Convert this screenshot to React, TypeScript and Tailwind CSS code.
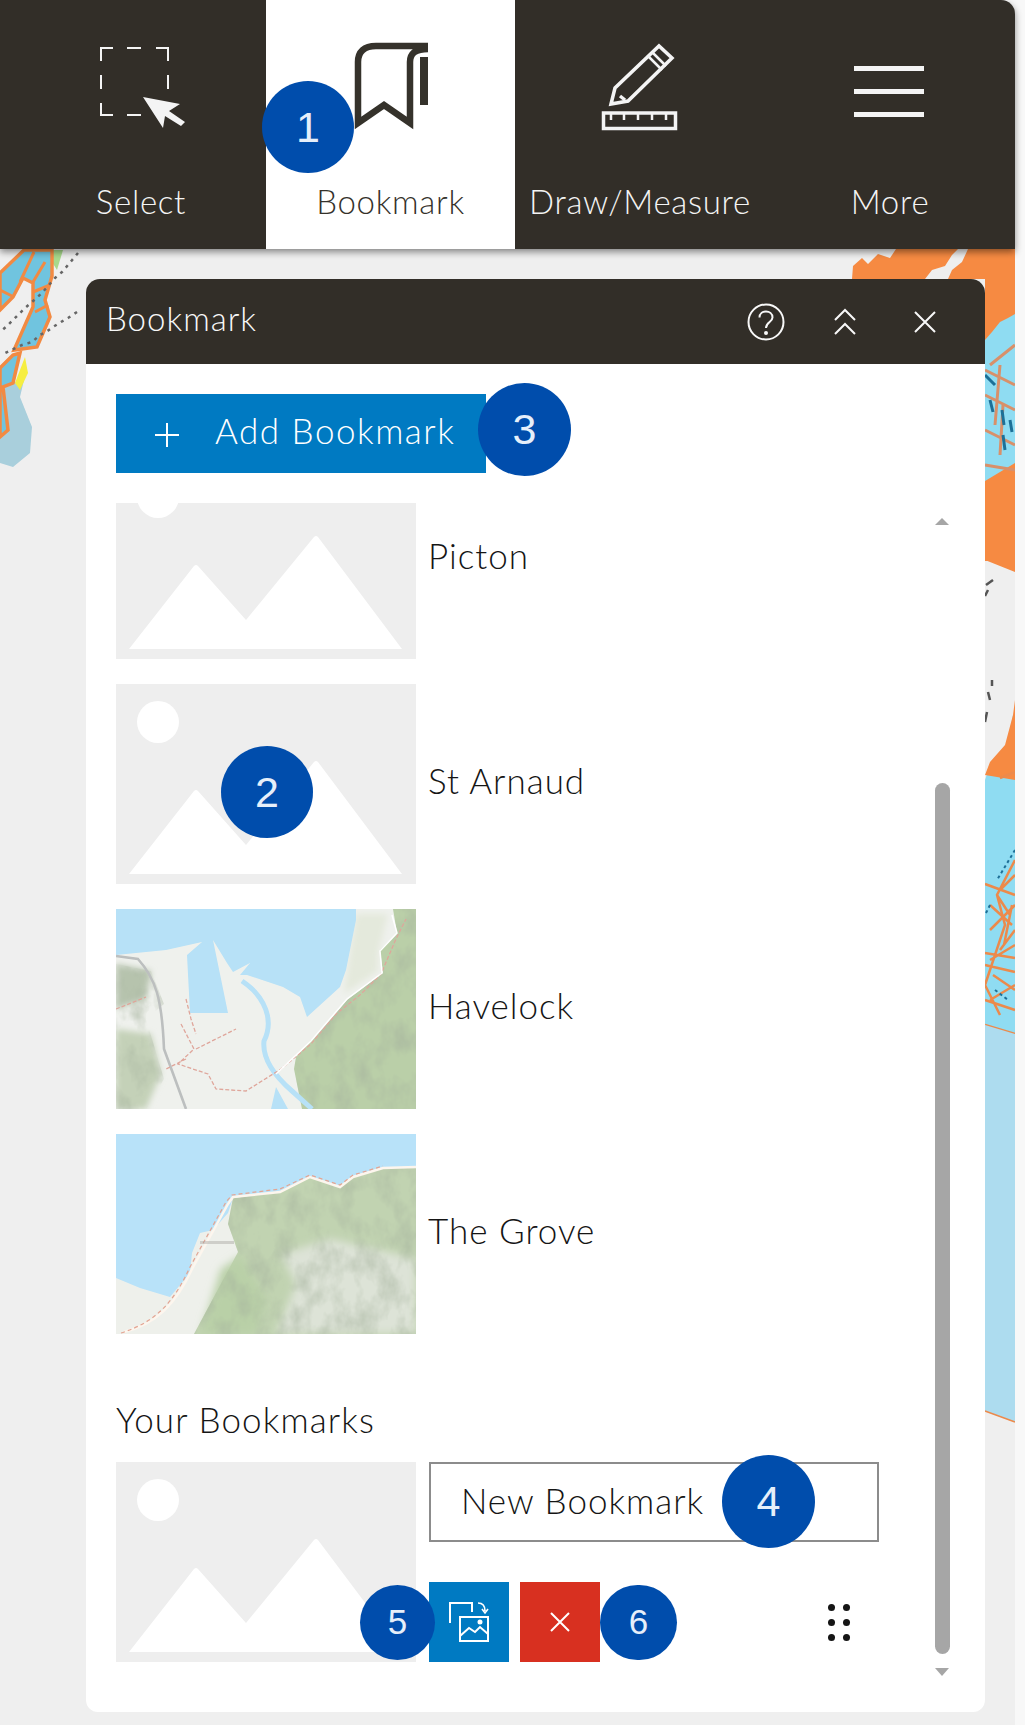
const panelFont = { fontFamily: 'Lato, "Open Sans", sans-serif' };

function Badge({ n, className }: { n: number; className: string }) {
  return (
    <div
      className={`absolute z-20 flex items-center justify-center rounded-full bg-[#004dac] text-[#e6effa] ${className}`}
      style={{ fontFamily: '"Liberation Sans", Arial, sans-serif' }}
    >
      {n}
    </div>
  );
}

function SelectIcon() {
  return (
    <svg viewBox="16 0 250 175" width={250} height={175}>
      <g fill="none" stroke="#f4f4f4" strokeWidth={2}>
        <path d="M101 61V48H113M127 48H141M156 48H168V61M101 75V89M168 75V89M101 103V115H113M127 115H141" />
      </g>
      <path d="M143 97L180 104L169 111L185 122L181 126L165 116L163 128Z" fill="#f4f4f4" />
    </svg>
  );
}

function BookmarkIcon() {
  return (
    <svg viewBox="265 0 250 175" width={250} height={175}>
      <path
        d="M427 46H375C363 46 357 52 357 62V123L383 105L409 123V62C409 53 415 49 427 49"
        fill="none"
        stroke="#35322b"
        strokeWidth={6.5}
      />
      <rect x={419} y={57} width={8} height={48} fill="#35322b" />
    </svg>
  );
}

function DrawIcon() {
  return (
    <svg viewBox="515 0 250 175" width={250} height={175}>
      <g fill="none" stroke="#f4f4f4" strokeWidth={3.5}>
        <path d="M611 104L615 88L659 46L672 58L628 101Z" />
        <path d="M648 56L662 70M652 52L666 66" strokeWidth={2.5} />
        <path d="M620 96L625 100" />
        <rect x={603.5} y={113} width={72} height={15.5} />
        <path d="M611 113V120M624 113V120M638 113V120M652 113V120M666 113V120" strokeWidth={2.5} />
      </g>
    </svg>
  );
}

function MoreIcon() {
  return (
    <svg viewBox="765 0 250 175" width={250} height={175}>
      <path d="M854 68.5H924M854 91.5H924M854 114.5H924" stroke="#f4f4f4" strokeWidth={5} />
    </svg>
  );
}

function Tab({ label, active, children }: { label: string; active?: boolean; children: React.ReactNode }) {
  return (
    <div className={`flex h-[249px] flex-col ${active ? 'w-[249px] bg-white text-[#35322b]' : 'w-[250px] text-[#f4f4f4]'}`}>
      {children}
      <div className="-mt-[2px] flex h-[58px] items-center justify-center text-[33px] font-light tracking-[0.7px] whitespace-nowrap">{label}</div>
    </div>
  );
}

function PlaceholderThumb() {
  return (
    <svg viewBox="0 0 300 200" width={300} height={200} className="block shrink-0">
      <rect width={300} height={200} fill="#eeeeee" />
      <circle cx={42} cy={38} r={21} fill="#ffffff" />
      <path d="M13 190L78 107Q80 105 82 107L130 161L198 78Q200 76 202 78L286 190Z" fill="#ffffff" />
    </svg>
  );
}

// soft relief over the hills of a map thumbnail
function Relief({ id, clip, seed }: { id: string; clip: string; seed: number }) {
  return (
    <>
      <defs>
        <filter id={id} x="0" y="0" width="100%" height="100%">
          <feTurbulence type="fractalNoise" baseFrequency="0.05 0.035" numOctaves={4} seed={seed} />
          <feColorMatrix values="0 0 0 0 0.38  0 0 0 0 0.45  0 0 0 0 0.34  1.2 0 0 0 -0.46" />
        </filter>
        <clipPath id={`${id}-clip`}>
          <path d={clip} />
        </clipPath>
      </defs>
      <g clipPath={`url(#${id}-clip)`}>
        <rect width={300} height={200} filter={`url(#${id})`} />
      </g>
    </>
  );
}

function HavelockThumb() {
  const hills = 'M277 0H300V200H186L178 160L180 148L211 114L231 91L267 64L264 41L281 24ZM0 55L35 62L48 95L30 110L48 170L30 200H0Z';
  return (
    <svg viewBox="0 0 300 200" width={300} height={200} className="block shrink-0">
      <defs>
        <filter id="havelock-blur">
          <feGaussianBlur stdDeviation={0.7} />
        </filter>
        <filter id="havelock-soft">
          <feGaussianBlur stdDeviation={3} />
        </filter>
      </defs>
      <rect width={300} height={200} fill="#eff1ed" />
      <g filter="url(#havelock-soft)">
        <path d="M0 55L35 62L30 90L0 100Z" fill="#b6c3ad" />
        <path d="M0 120L35 125L45 165L30 200H0Z" fill="#c4d1b8" />
        <path d="M240 5L272 5L262 45L262 62L228 85Z" fill="#e4e9dc" />
      </g>
      <g filter="url(#havelock-blur)">
        <path d="M277 0H300V200H186L178 160L180 148L211 114L231 91L267 64L264 41L281 24Z" fill="#bacfa8" />
      </g>
      <Relief id="havelock-relief" clip={hills} seed={4} />
      <g filter="url(#havelock-blur)">
        <path d="M0 0H240V11L230 61L224 78L191 108L184 88L167 78L131 66L124 66L134 54L117 63L111 54L97 31L112 104L74 104L71 46L86 33L50 41L0 46Z" fill="#b7e1f7" />
        <path d="M126 72C150 88 158 112 148 132C146 150 160 168 176 182L196 200" fill="none" stroke="#b7e1f7" strokeWidth={5} />
        <path d="M160 178L172 200H155Z" fill="#b7e1f7" />
        <path d="M0 47L22 50C40 70 46 90 48 140L70 200" fill="none" stroke="#bcbfbf" strokeWidth={2.6} />
        <path d="M0 100L30 88M70 90L75 110L80 125M65 115L78 140L62 155L92 165L100 180L130 182L165 160L195 135L220 105L245 85L265 65L280 30L290 10M70 150L50 160M80 140L120 120" fill="none" stroke="#dfa69b" strokeWidth={1.3} strokeDasharray="4 2" />
        <path d="M160 165L195 132L231 90L266 64L264 42L281 24L276 6" fill="none" stroke="#ffffff" strokeWidth={1.5} />
      </g>
    </svg>
  );
}

function GroveThumb() {
  const hills = 'M117 64L164 58L194 43L224 53L237 43L267 34L300 33V200H78L122 118L112 90Z';
  return (
    <svg viewBox="0 0 300 200" width={300} height={200} className="block shrink-0">
      <defs>
        <filter id="grove-blur">
          <feGaussianBlur stdDeviation={0.7} />
        </filter>
        <filter id="grove-soft">
          <feGaussianBlur stdDeviation={4} />
        </filter>
      </defs>
      <rect width={300} height={200} fill="#eef0eb" />
      <path d={hills} fill="#c1d3b1" />
      <g filter="url(#grove-soft)">
        <path d="M165 120L215 105L300 125V200H160L180 150Z" fill="#dde3d7" />
        <path d="M85 200L105 135L125 122L150 165L140 200Z" fill="#b9d0a7" />
      </g>
      <Relief id="grove-relief" clip={hills} seed={9} />
      <g filter="url(#grove-blur)">
        <path d="M0 0H300V33L267 34L237 43L224 53L194 43L164 58L117 64L112 79L97 96L84 99L76 119L74 139L54 163L24 154L0 144Z" fill="#b8e2f9" />
        <path d="M8 198C40 190 60 170 76 135L112 70L117 63L164 58L194 43L224 53L237 43L267 34L300 33" fill="none" stroke="#fdf6ee" strokeWidth={2.5} />
        <path d="M5 199C40 188 58 168 74 133L110 68L116 61L164 55L194 41L224 51L237 41L267 32" fill="none" stroke="#e3a593" strokeWidth={1.2} strokeDasharray="4 3" />
      </g>
      <rect x={84} y={107} width={34} height={3} fill="#9e9a96" opacity={0.4} />
    </svg>
  );
}

function BookmarkRow({ title, thumb }: { title: string; thumb: React.ReactNode }) {
  return (
    <div className="flex h-[200px] gap-[12px]">
      {thumb}
      <div className="flex h-[192px] items-center text-[35px] font-light tracking-[1px] whitespace-nowrap text-[#151515]">{title}</div>
    </div>
  );
}

function MapBackdrop() {
  return (
    <svg className="absolute top-[249px] left-0" viewBox="0 249 1015 1476" width={1015} height={1476}>
      <defs>
        <filter id="map-soft">
          <feGaussianBlur stdDeviation={0.6} />
        </filter>
      </defs>
      <rect x={0} y={249} width={1015} height={1476} fill="#efefef" />
      <g filter="url(#map-soft)">
        {/* left side */}
        <path d="M0 463L13 467L30 453L32 427L20 397L24 380L0 385Z" fill="#a9cfdc" />
        <path d="M52 250L63 250L57 270L52 262Z" fill="#a8d98c" />
        <path d="M0 273L24 250L52 250L52 276L45 300L50 317L37 347L14 350L33 307L33 283L23 278L13 297L0 310Z" fill="#6fc4df" stroke="#f28a43" strokeWidth={3.5} />
        <path d="M0 368L13 355L20 353L13 383L3 387L8 430L0 437Z" fill="#6fc4df" stroke="#f28a43" strokeWidth={3.5} />
        <path d="M34 252L20 282M45 262L33 282M50 285L33 292M48 305L35 312M0 290L12 296" stroke="#f28a43" strokeWidth={3} fill="none" />
        <path d="M25 357L28 373L20 390L15 383Z" fill="#f6ee3f" />
        <path d="M78 253L68 265L62 272L55 278L42 293L32 302L25 308L19 314L13 320L7 326L0 332M77 312L68 318L61 322L53 327L46 332L40 335L32 342L22 345L5 353" fill="none" stroke="#666666" strokeWidth={2.5} strokeDasharray="3 5" />
        {/* top and right strip */}
        <path d="M852 279L853 266L862 258L868 264L878 254L890 258L896 249H1015V279Z" fill="#f68a43" />
        <path d="M925 279L932 270L945 266L952 255L958 249H968L962 262L952 270L948 279Z" fill="#eeeeee" />
        <rect x={985} y={279} width={30} height={282} fill="#f68a43" />
        <path d="M985 340L992 332L1000 322L1008 318L1015 314V463L985 481Z" fill="#8fdcf2" />
        <path d="M985 370L1015 385M990 365L1015 345M985 395L1015 410M985 430L1015 445M1000 365L995 425M985 465L1015 470M1003 405L1000 455" stroke="#d8906a" strokeWidth={3} fill="none" />
        <path d="M990 400L993 412M1002 410L1004 425M1010 420L1012 432M985 375L995 385M1003 435L1005 450" stroke="#1f6f97" strokeWidth={3} fill="none" />
        <path d="M985 560L1015 572V561H985Z" fill="#f68a43" />
        <path d="M986 585L993 580M985 596L988 590M992 680L992 686M988 692L990 700M987 712L985 722" stroke="#555555" strokeWidth={2.5} />
        <path d="M985 780L990 765L1007 744L1013 715H1015V1034L985 1025Z" fill="#8fdcf2" />
        <path d="M1013 715L1015 700V780L985 775L990 762L1005 745Z" fill="#f68a43" />
        <path d="M985 884L1015 895M985 953L1015 958M985 965L1015 972M985 1025L1015 1034M1015 860L997 895L1005 925L985 985L1000 1015M1015 905L990 930M1015 930L1000 950M1015 985L990 1000M1000 778L1015 772M1015 875L1000 890M1012 905L1004 945M1015 945L990 960M993 975L1015 990M985 1000L1015 1010M990 905L1012 925M997 895L1010 915" stroke="#ec8a4c" strokeWidth={2.5} fill="none" />
        <path d="M1015 850L997 880M990 905L985 915M995 990L1008 1000" stroke="#1f6f97" strokeWidth={2} strokeDasharray="3 3" fill="none" />
        <path d="M985 1025L1015 1034V1422L985 1411Z" fill="#addcef" />
        <path d="M985 1411L1015 1422" stroke="#ec8a4c" strokeWidth={1.5} />
      </g>
    </svg>
  );
}

export default function App() {
  return (
    <div className="relative h-[1725px] w-[1025px] overflow-hidden bg-[#f8f8f8]" style={panelFont}>
      <MapBackdrop />

      {/* top toolbar */}
      <div className="relative z-10 flex h-[249px] w-[1015px] rounded-tr-[14px] bg-[#322e28] pl-[16px] shadow-[0_3px_7px_rgba(0,0,0,0.45)]">
        <Tab label="Select">
          <SelectIcon />
        </Tab>
        <Tab label="Bookmark" active>
          <BookmarkIcon />
        </Tab>
        <Tab label="Draw/Measure">
          <DrawIcon />
        </Tab>
        <Tab label="More">
          <MoreIcon />
        </Tab>
      </div>

      {/* bookmark panel */}
      <div className="relative mt-[30px] ml-[86px] flex h-[1433px] w-[899px] flex-col overflow-hidden rounded-t-[14px] rounded-b-[12px] bg-white">
        <div className="flex h-[85px] shrink-0 items-center justify-between bg-[#322e28] pr-[49px] pl-[20px] text-[#f8f8f8]">
          <span className="-mt-[6px] text-[33px] font-light tracking-[1px]">Bookmark</span>
          <div className="flex items-center">
            <svg viewBox="0 0 40 40" width={40} height={40}>
              <circle cx={20} cy={20} r={17.5} fill="none" stroke="#f8f8f8" strokeWidth={2} />
              <path d="M13.5 15.5C13.5 7.5 26.5 7.5 26.5 15.5C26.5 20 20 20 20 26" fill="none" stroke="#f8f8f8" strokeWidth={2} />
              <circle cx={20} cy={31} r={2} fill="#f8f8f8" />
            </svg>
            <svg viewBox="0 0 22 30" width={22} height={30} className="ml-[48px]">
              <path d="M1 13L11 3L21 13M1 27L11 17L21 27" fill="none" stroke="#f8f8f8" strokeWidth={2} />
            </svg>
            <svg viewBox="0 0 22 22" width={22} height={22} className="ml-[58px]">
              <path d="M1 1L21 21M21 1L1 21" fill="none" stroke="#f8f8f8" strokeWidth={2} />
            </svg>
          </div>
        </div>

        <div className="flex min-h-0 flex-1 flex-col pt-[30px] pl-[30px]">
          <button className="flex h-[79px] w-[370px] shrink-0 items-center bg-[#007ac2] pl-[39px] text-[35px] font-light tracking-[1.5px] text-white">
            <svg viewBox="0 0 24 24" width={24} height={24} className="mt-[3px]">
              <path d="M12 0V24M0 12H24" stroke="#ffffff" strokeWidth={2} />
            </svg>
            <span className="-mt-[7px] ml-[36px] whitespace-nowrap">Add Bookmark</span>
          </button>

          <div className="mt-[30px] min-h-0 flex-1 overflow-hidden">
            <div className="-mt-[44px] flex flex-col gap-[25px]">
              <BookmarkRow title="Picton" thumb={<PlaceholderThumb />} />
              <BookmarkRow title="St Arnaud" thumb={<PlaceholderThumb />} />
              <BookmarkRow title="Havelock" thumb={<HavelockThumb />} />
              <BookmarkRow title="The Grove" thumb={<GroveThumb />} />
            </div>
            <div className="mt-[62px] text-[35px] leading-[46px] font-light tracking-[1.1px] whitespace-nowrap text-[#151515]">Your Bookmarks</div>
            <div className="mt-[20px] flex gap-[13px]">
              <PlaceholderThumb />
              <div className="flex h-[200px] w-[450px] flex-col justify-between">
                <div className="flex h-[80px] items-center border-2 border-[#8c8c8c] pb-[4px] pl-[30px] text-[35px] font-light tracking-[1px] text-[#151515]">New Bookmark</div>
                <div className="flex items-center">
                  <div className="flex h-[80px] w-[80px] items-center justify-center bg-[#007ac2]">
                    <svg viewBox="0 0 40 40" width={40} height={40} fill="none" stroke="#ffffff" strokeWidth={2}>
                      <path d="M1 21V1H23V10" />
                      <rect x={11} y={15} width={28} height={24} />
                      <path d="M11 34L20 26L26 30L31 25L39 32" />
                      <circle cx={31} cy={20} r={1.5} fill="#ffffff" />
                      <path d="M29 1C33 1 36 3 36 9M33 7L36 11L39 7" strokeWidth={1.6} />
                    </svg>
                  </div>
                  <div className="ml-[11px] flex h-[80px] w-[80px] items-center justify-center bg-[#d83020]">
                    <svg viewBox="0 0 20 20" width={20} height={20}>
                      <path d="M1 1L19 19M19 1L1 19" fill="none" stroke="#ffffff" strokeWidth={2} />
                    </svg>
                  </div>
                  <div className="ml-[228px] grid grid-cols-2 gap-x-[8px] gap-y-[8px]">
                    {[0, 1, 2, 3, 4, 5].map((i) => (
                      <div key={i} className="h-[7px] w-[7px] rounded-full bg-[#151515]" />
                    ))}
                  </div>
                </div>
              </div>
            </div>
          </div>
        </div>

        {/* scrollbar */}
        <div className="absolute top-[239px] left-[849px] h-0 w-0 border-x-[7.5px] border-b-[7px] border-x-transparent border-b-[#a6a6a6]" />
        <div className="absolute top-[504px] left-[849px] h-[871px] w-[15px] rounded-full bg-[#a6a6a6]" />
        <div className="absolute top-[1389px] left-[849px] h-0 w-0 border-x-[7.5px] border-t-[8px] border-x-transparent border-t-[#a6a6a6]" />
      </div>

      <Badge n={1} className="top-[81px] left-[262px] h-[92px] w-[92px] text-[43px]" />
      <Badge n={2} className="top-[746px] left-[221px] h-[92px] w-[92px] text-[43px]" />
      <Badge n={3} className="top-[383px] left-[478px] h-[93px] w-[93px] text-[43px]" />
      <Badge n={4} className="top-[1455px] left-[722px] h-[93px] w-[93px] text-[43px]" />
      <Badge n={5} className="top-[1585px] left-[360px] h-[75px] w-[75px] text-[35px]" />
      <Badge n={6} className="top-[1585px] left-[600px] h-[75px] w-[77px] text-[35px]" />
    </div>
  );
}
